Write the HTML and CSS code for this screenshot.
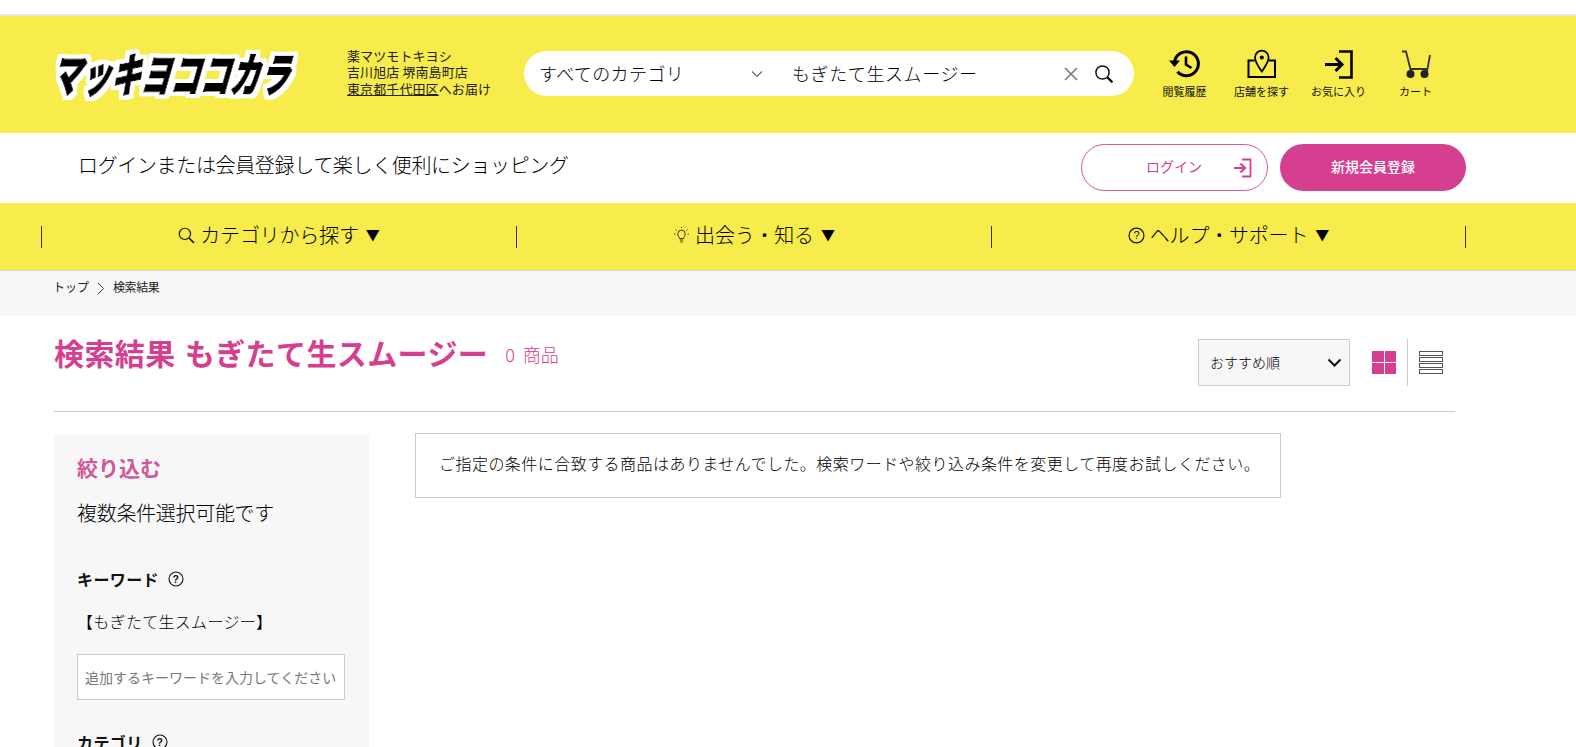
FILE: index.html
```html
<!DOCTYPE html>
<html lang="ja">
<head>
<meta charset="utf-8">
<title>検索結果 もぎたて生スムージー</title>
<link rel="stylesheet" href="styles.css">
</head>
<body>
<div class="topline"></div>
<header class="header">
  <a class="logo" href="#">
    <svg width="250" height="60" viewBox="0 0 250 60">
      <defs>
        <filter id="halo" filterUnits="userSpaceOnUse" x="-10" y="-10" width="280" height="80">
          <feMorphology in="SourceAlpha" operator="dilate" radius="3.500" result="d"/>
          <feFlood flood-color="#fff"/>
          <feComposite in2="d" operator="in" result="w"/>
          <feMerge><feMergeNode in="w"/><feMergeNode in="SourceGraphic"/></feMerge>
        </filter>
      </defs>
      <g filter="url(#halo)">
        <text class="logo-text" x="12" y="48" transform="skewX(-16)" textLength="238" lengthAdjust="spacingAndGlyphs">マッキヨココカラ</text>
      </g>
    </svg>
  </a>
  <div class="store">
    <div>薬マツモトキヨシ</div>
    <div>吉川旭店 堺南島町店</div>
    <div><a href="#">東京都千代田区</a>へお届け</div>
  </div>
  <form class="search">
    <div class="search-cat">すべてのカテゴリ</div>
    <svg class="search-chev" width="12" height="8" viewBox="0 0 12 8"><path d="M1 1.500l5 5 5-5" fill="none" stroke="#666" stroke-width="1.100"/></svg>
    <div class="search-term">もぎたて生スムージー</div>
    <svg class="search-x" width="14" height="14" viewBox="0 0 14 14"><path d="M1 1l12 12M13 1L1 13" stroke="#777" stroke-width="1.500"/></svg>
    <svg class="search-go" width="20" height="20" viewBox="0 0 20 20"><circle cx="8.500" cy="8.500" r="6.600" fill="none" stroke="#111" stroke-width="1.500"/><path d="M13.400 13.400l5 5" stroke="#111" stroke-width="2.200"/></svg>
  </form>
  <nav class="tools">
    <a class="tool" href="#">
      <svg width="34" height="30" viewBox="0 0 34 30"><path d="M6.600 12.500A12 12 0 1 1 9.500 22.800" fill="none" stroke="#000" stroke-width="3"/><path d="M1 11.500h11l-5.500 6.500z" fill="#000"/><path d="M18 7.500v8l5.500 3.500" fill="none" stroke="#000" stroke-width="2.600"/></svg>
      <span>閲覧履歴</span>
    </a>
    <a class="tool" href="#">
      <svg width="30" height="30" viewBox="0 0 30 30"><path d="M7.500 11.500H1.500v16.500h26.500V11.500h-6" fill="none" stroke="#000" stroke-width="2"/><path d="M14.800 22.500C11 17 8 13 8 8.500a6.800 6.800 0 0 1 13.600 0c0 4.500-3 8.500-6.800 14z" fill="none" stroke="#000" stroke-width="1.800"/><circle cx="14.800" cy="8.500" r="2" fill="#000"/></svg>
      <span>店舗を探す</span>
    </a>
    <a class="tool" href="#">
      <svg width="30" height="30" viewBox="0 0 30 30"><path d="M15 2.500h12.500v26H15" fill="none" stroke="#000" stroke-width="2.600"/><path d="M1 15.500h17M11.500 9l6.500 6.500-6.500 6.500" fill="none" stroke="#000" stroke-width="3"/></svg>
      <span>お気に入り</span>
    </a>
    <a class="tool" href="#">
      <svg width="30" height="30" viewBox="0 0 30 30"><path d="M1 2.500h4l5 20M29 6l-3 16.500M9 20h18" fill="none" stroke="#333" stroke-width="1.800"/><circle cx="9.500" cy="25" r="4" fill="#222"/><circle cx="23.500" cy="25" r="4" fill="#222"/></svg>
      <span>カート</span>
    </a>
  </nav>
</header>
<section class="loginbar">
  <p class="login-msg">ログインまたは会員登録して楽しく便利にショッピング</p>
  <div class="login-btns">
    <a class="btn btn-outline" href="#">
      <span>ログイン</span>
      <svg width="19" height="20" viewBox="0 0 19 20"><path d="M9 1.500h8.500v17H9" fill="none" stroke="#d63f8f" stroke-width="1.800"/><path d="M1 10h11M7.500 5.500L12 10l-4.500 4.500" fill="none" stroke="#d63f8f" stroke-width="2.200"/></svg>
    </a>
    <a class="btn btn-solid" href="#"><span>新規会員登録</span></a>
  </div>
</section>
<nav class="gnav">
  <a class="gnav-item" href="#">
    <svg width="17" height="17" viewBox="0 0 16 16"><circle cx="6.500" cy="6.500" r="5.300" fill="none" stroke="#111" stroke-width="1.100"/><path d="M10.300 10.300l4.700 4.700" stroke="#111" stroke-width="1.500"/></svg>
    <span>カテゴリから探す</span><i class="tri">▼</i>
  </a>
  <a class="gnav-item" href="#">
    <svg width="17" height="17" viewBox="0 0 17 17"><path d="M6.500 11.500C6 9.500 4.800 9 4.800 6.800a3.700 3.700 0 0 1 7.400 0c0 2.200-1.200 2.700-1.700 4.700zM6.700 13h3.600M7.300 15h2.400" fill="none" stroke="#222" stroke-width=".9"/><path d="M1 7h1.500M14.500 7H16M2.500 2.500l1 1M14.500 2.500l-1 1M8.500 0v1" stroke="#222" stroke-width=".8"/></svg>
    <span>出会う・知る</span><i class="tri">▼</i>
  </a>
  <a class="gnav-item" href="#">
    <svg width="17" height="17" viewBox="0 0 16 16"><circle cx="8" cy="8" r="7" fill="none" stroke="#111" stroke-width="1.100"/><text x="8" y="11.600" text-anchor="middle" class="help-q">?</text></svg>
    <span>ヘルプ・サポート</span><i class="tri">▼</i>
  </a>
</nav>
<div class="crumbs">
  <a href="#">トップ</a>
  <svg width="8" height="13" viewBox="0 0 8 13"><path d="M1 1l5.500 5.500L1 12" fill="none" stroke="#333" stroke-width="1"/></svg>
  <span class="crumb-now">検索結果</span>
</div>
<main class="main">
  <div class="result-head">
    <h1 class="result-title">検索結果 もぎたて生スムージー</h1>
    <span class="result-count">0 商品</span>
    <div class="result-tools">
      <div class="sort"><span>おすすめ順</span>
        <svg width="15" height="9" viewBox="0 0 15 9"><path d="M1.500 1.500l6 6 6-6" fill="none" stroke="#111" stroke-width="2"/></svg>
      </div>
      <div class="view view-grid"><i></i><i></i><i></i><i></i></div>
      <div class="view-sep"></div>
      <div class="view view-list"><i></i><i></i><i></i><i></i></div>
    </div>
  </div>
  <div class="content">
    <aside class="filter">
      <h2 class="filter-title">絞り込む</h2>
      <p class="filter-note">複数条件選択可能です</p>
      <h3 class="filter-label">キーワード
        <svg width="16" height="16" viewBox="0 0 16 16"><circle cx="8" cy="8" r="7" fill="none" stroke="#111" stroke-width="1.100"/><text x="8" y="11.600" text-anchor="middle" class="help-q">?</text></svg>
      </h3>
      <p class="filter-word">【もぎたて生スムージー】</p>
      <div class="filter-input">追加するキーワードを入力してください</div>
      <h3 class="filter-label filter-cat">カテゴリ
        <svg width="16" height="16" viewBox="0 0 16 16"><circle cx="8" cy="8" r="7" fill="none" stroke="#111" stroke-width="1.100"/><text x="8" y="11.600" text-anchor="middle" class="help-q">?</text></svg>
      </h3>
    </aside>
    <div class="notice">ご指定の条件に合致する商品はありませんでした。検索ワードや絞り込み条件を変更して再度お試しください。</div>
  </div>
</main>
</body>
</html>
```
FILE: styles.css
```css
* { box-sizing: border-box; }
html, body { margin: 0; padding: 0; height: 747px; overflow: hidden; }
body {
  background: #fff;
  color: #000;
  font-family: "Noto Sans CJK JP", "Noto Sans", sans-serif;
  font-weight: 300;
}
a { color: inherit; text-decoration: none; }
h1, h2, h3, p { margin: 0; font-weight: inherit; }
i { font-style: normal; }

.topline { height: 16px; border-bottom: 2px solid #e4e4e4; background: #fff; }

.header {
  height: 117px;
  background: #f7ec4b;
  display: flex;
  align-items: center;
  padding: 0 0 2px 52px;
}
.logo { width: 250px; height: 60px; display: block; flex: none; }
.logo svg { display: block; overflow: visible; }
.logo-text { font-size: 46px; font-weight: 900; fill: #000; stroke: #000; stroke-width: 1.200px; }
.store { width: 177px; margin: 0 0 2px 45px; font-size: 13px; line-height: 16.500px; letter-spacing: .1px; font-weight: 400; color: #222; flex: none; white-space: nowrap; }
.store a { text-decoration: underline; }

.search {
  width: 610px;
  height: 45px;
  background: #fff;
  border-radius: 23px;
  display: flex;
  align-items: center;
  font-size: 18px;
  flex: none;
  padding-left: 15px;
  color: #000;
}
.search-cat { width: 212px; flex: none; letter-spacing: .4px; margin-bottom: 2px; }
.search-chev { flex: none; }
.search-term { width: 272px; margin: 0 0 2px 29px; flex: none; letter-spacing: .6px; }
.search-x { flex: none; }
.search-go { margin-left: 16px; flex: none; }

.tools { display: flex; margin-left: 12px; flex: none; }
.tool { width: 77px; display: flex; flex-direction: column; align-items: center; font-size: 11px; line-height: 14px; font-weight: 400; color: #111; }
.tool svg { display: block; height: 30px; margin-bottom: 5px; }
.tool span { white-space: nowrap; }

.loginbar { height: 70px; display: flex; justify-content: space-between; padding: 0 110px 0 78px; align-items: flex-start; }
.login-msg { font-size: 20px; line-height: 30px; margin-top: 17px; letter-spacing: -.35px; color: #000; }
.login-btns { display: flex; gap: 12px; margin-top: 11px; }
.btn { width: 186px; height: 47px; border-radius: 24px; display: flex; align-items: center; font-size: 14px; }
.btn span { margin-bottom: 3px; }
.btn-outline { width: 187px; border: 1px solid #d0589b; color: #d63f8f; padding-left: 64px; font-weight: 400; }
.btn-outline svg { margin-left: 31px; }
.btn-solid { background: #d63f8f; color: #fff; justify-content: center; font-weight: 500; }

.gnav {
  height: 68px;
  background: #f7ec4b;
  border-bottom: 1px solid #d9d9d9;
  display: grid;
  grid-template-columns: repeat(3, 475px);
  padding: 0 0 0 41px;
  align-items: center;
}
.gnav-item {
  height: 22px;
  border-left: 1px solid #333;
  display: flex;
  align-items: center;
  justify-content: center;
  gap: 5px;
  font-size: 20px;
  color: #000;
}
.gnav-item:last-child { border-right: 1px solid #333; }
.gnav-item span { margin-bottom: 5px; letter-spacing: -.2px; }
.gnav-item svg { margin-bottom: 2px; }
.tri { font-size: 14px; margin: 0 0 5px 2px; color: #000; font-weight: 400; }
.help-q { font-size: 10.500px; fill: #111; font-family: "Liberation Sans", sans-serif; }

.crumbs { height: 45px; background: #f7f7f7; display: flex; align-items: flex-start; padding: 7px 0 0 53px; font-size: 12px; line-height: 17px; gap: 8px; color: #222; font-weight: 400; }
.crumbs svg { margin-top: 4px; }
.crumb-now { letter-spacing: -.4px; }

.main { padding: 0 121px 0 54px; }
.result-head { height: 96px; border-bottom: 1px solid #ccc; display: flex; align-items: flex-start; }
.result-title { font-size: 30px; font-weight: 700; color: #d63f8f; line-height: 44px; margin-top: 14px; white-space: nowrap; letter-spacing: .4px; word-spacing: 2px; }
.result-count { font-size: 18px; color: #d63f8f; line-height: 26px; margin: 25px 0 0 17px; word-spacing: 4px; }
.result-tools { margin-left: auto; display: flex; align-items: center; margin-top: 23px; padding-right: 12px; }
.sort {
  width: 152px;
  height: 47px;
  background: #f7f7f7;
  border: 1px solid #ccc;
  display: flex;
  align-items: center;
  justify-content: space-between;
  padding: 0 7px 0 11px;
  font-size: 14px;
  color: #000;
}
.sort span { margin-bottom: 2px; }
.view { width: 24px; height: 23px; }
.view-grid { display: grid; grid-template-columns: 1fr 1fr; gap: 1px; margin-left: 22px; }
.view-grid i { background: #d63f8f; }
.view-sep { width: 1px; height: 47px; background: #ccc; margin: 0 11px; }
.view-list { display: flex; flex-direction: column; gap: 1px; }
.view-list i { flex: 1; border: 1px solid #555; background: #fff; }

.content { display: flex; align-items: flex-start; margin-top: 22px; }
.filter { width: 315px; height: 340px; background: #f7f7f7; padding: 17px 24px 0 23px; flex: none; overflow: hidden; }
.filter-title { font-size: 21px; font-weight: 700; color: #d0589b; line-height: 32px; }
.filter-note { font-size: 20px; line-height: 30px; margin-top: 15px; letter-spacing: -.3px; color: #000; }
.filter-label { font-size: 16px; font-weight: 700; line-height: 24px; margin-top: 39px; display: flex; align-items: center; gap: 9px; color: #111; letter-spacing: .4px; }
.filter-word { font-size: 16px; line-height: 24px; margin-top: 18px; letter-spacing: .3px; color: #000; }
.filter-input {
  height: 46px;
  width: 268px;
  margin-top: 21px;
  background: #fff;
  border: 1px solid #ccc;
  font-size: 14px;
  line-height: 44px;
  padding-left: 7px;
  color: #777;
  font-weight: 400;
  white-space: nowrap;
  overflow: hidden;
}
.filter-cat { margin-top: 30px; }
.notice {
  width: 866px;
  height: 65px;
  margin: -1px 0 0 46px;
  border: 1px solid #ccc;
  font-size: 16px;
  line-height: 58px;
  padding-left: 23px;
  letter-spacing: .46px;
  color: #000;
  white-space: nowrap;
  flex: none;
}
```
